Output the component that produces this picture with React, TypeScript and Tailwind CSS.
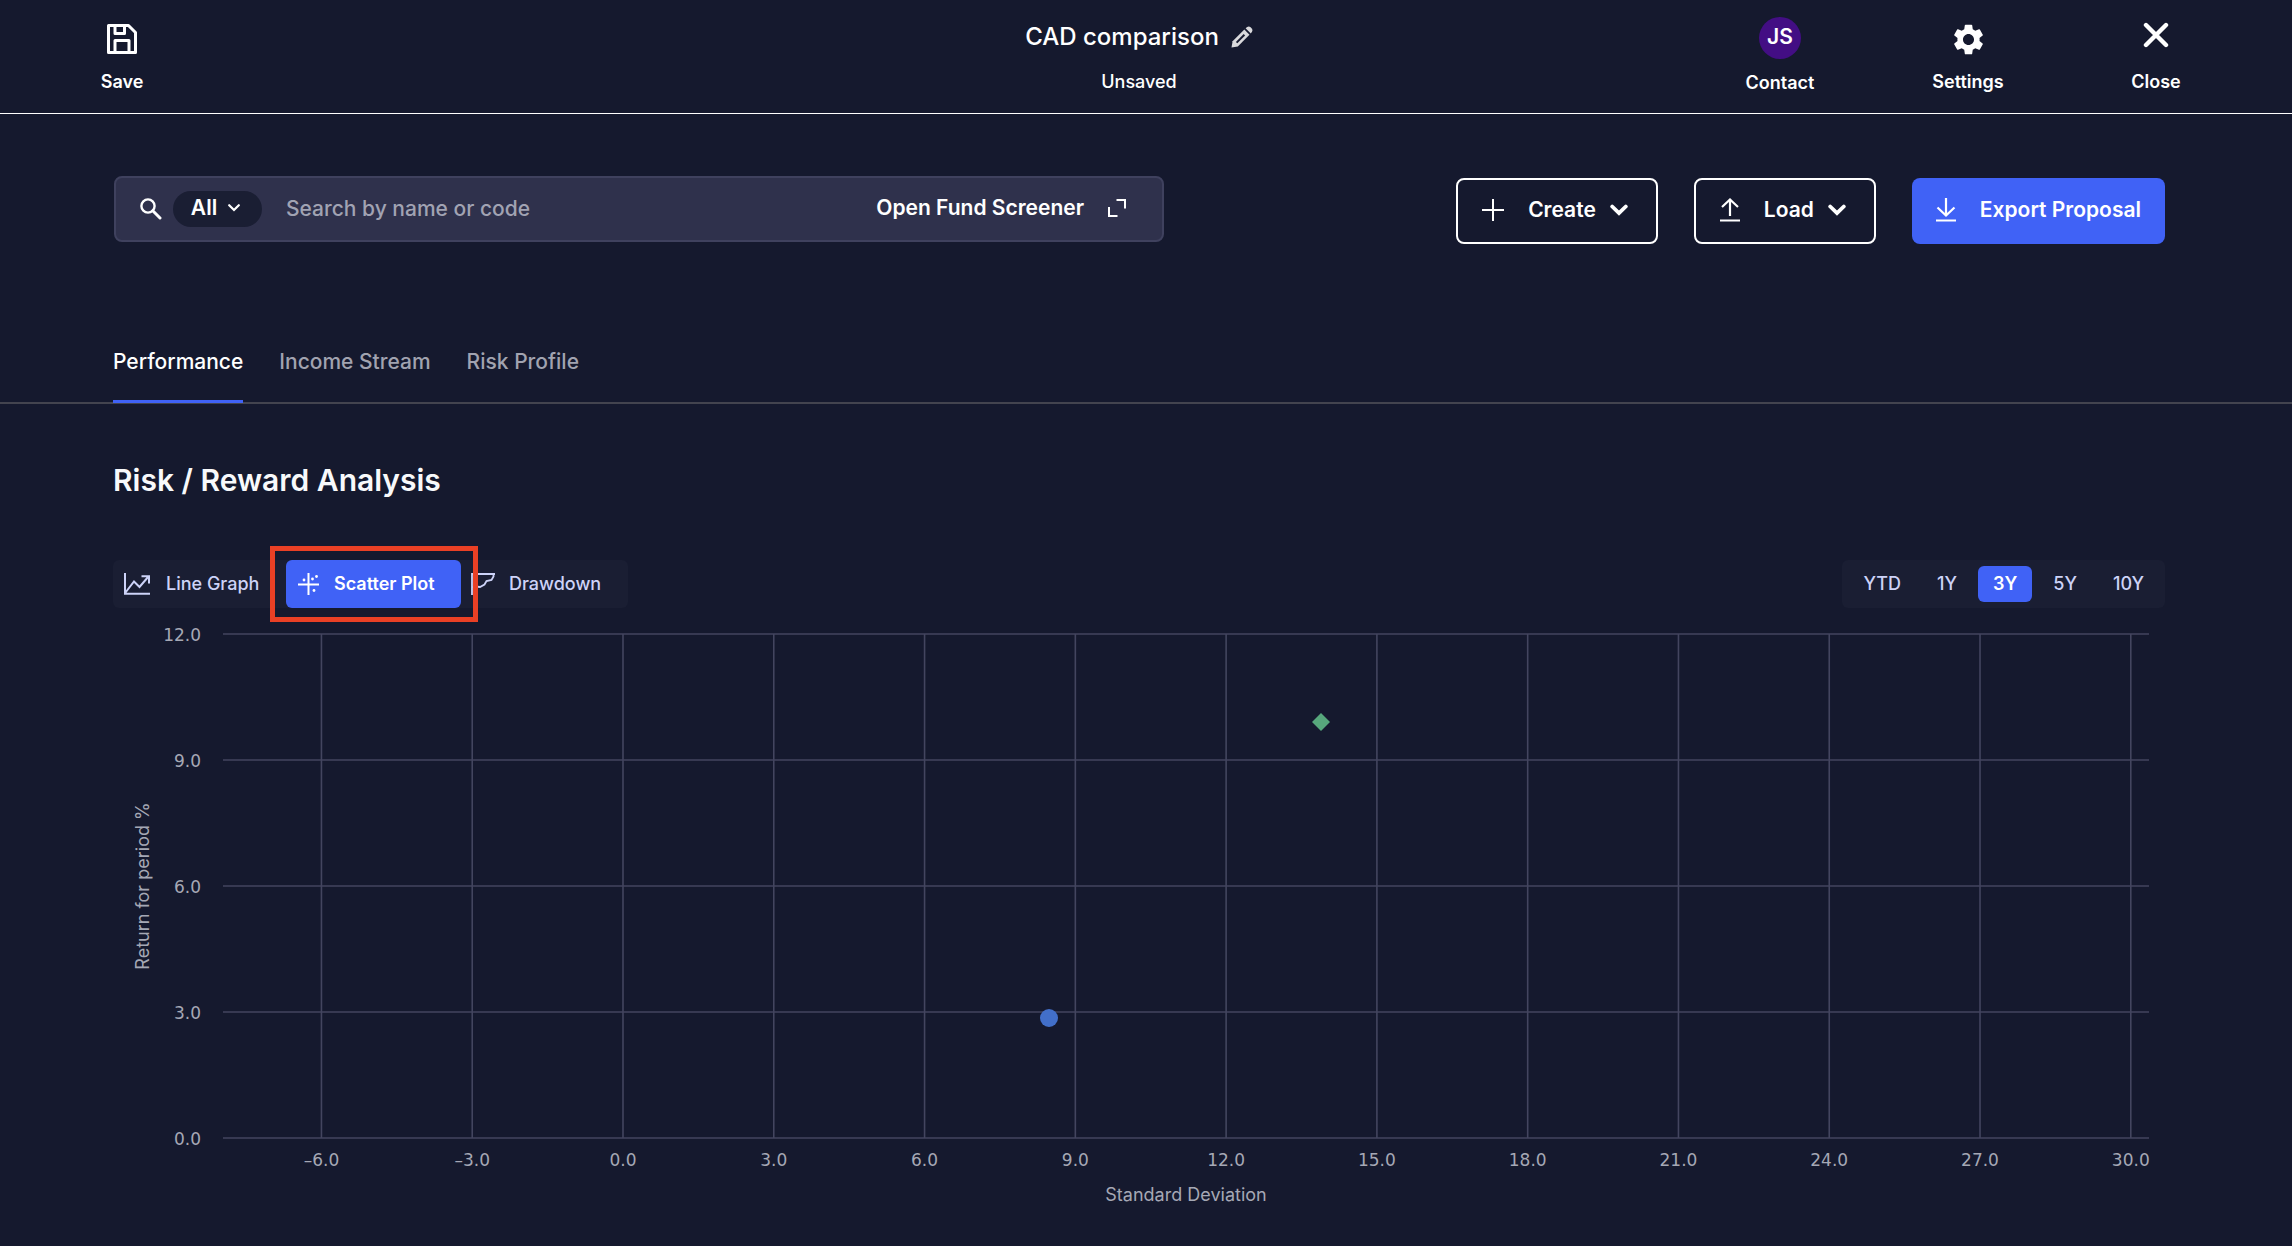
import React from "react";
import { MdSettings } from "react-icons/md";

const SaveIcon = () => (
  <svg width="30" height="30" viewBox="0 0 30 30" fill="none" stroke="currentColor" strokeWidth="3" strokeLinejoin="round" aria-hidden="true">
    <path d="M1.5 1.5H21.5L28.5 8.5V28.5H1.5Z" />
    <path d="M8 2V9.5H17.5V2" />
    <path d="M8 28V16.5H22V28" />
  </svg>
);

const PencilIcon = () => (
  <svg width="22" height="22" viewBox="0 0 22 22" aria-hidden="true">
    <path d="M0.5 21.5L1.6 15.2L13.3 3.5L18.5 8.7L6.8 20.4Z" fill="#d9d9dc" />
    <path d="M5.6 16.6L13.4 8.8" stroke="#15192e" strokeWidth="2" />
    <path d="M14.6 2.2L16.2 0.9Q18 0 19.6 1.2L21 2.8Q22 4.4 21 5.8L19.8 7.4Z" fill="#d9d9dc" />
  </svg>
);

const CloseIcon = () => (
  <svg width="26" height="26" viewBox="0 0 26 26" fill="none" stroke="currentColor" strokeWidth="4.4" strokeLinecap="round" aria-hidden="true">
    <path d="M3 3L23 23M23 3L3 23" />
  </svg>
);

const SearchIcon = () => (
  <svg width="22" height="22" viewBox="0 0 22 22" fill="none" stroke="currentColor" aria-hidden="true">
    <circle cx="8" cy="8" r="6.6" strokeWidth="2.4" />
    <path d="M12.8 12.8L20 20" strokeWidth="3" strokeLinecap="round" />
  </svg>
);

const ExpandIcon = () => (
  <svg width="18" height="18" viewBox="0 0 18 18" fill="none" stroke="currentColor" strokeWidth="2" aria-hidden="true">
    <path d="M8.5 1H17V9.5M1 8V17H9.5" />
  </svg>
);

const PlusIcon = () => (
  <svg width="22" height="22" viewBox="0 0 22 22" fill="none" stroke="currentColor" strokeWidth="2" aria-hidden="true">
    <path d="M11 0V22M0 11H22" />
  </svg>
);

const UploadIcon = () => (
  <svg width="20" height="24" viewBox="0 0 20 24" fill="none" stroke="currentColor" strokeWidth="2.2" aria-hidden="true">
    <path d="M10 18V1.5M2 9L10 1.5L18 9M0 22.5H20" />
  </svg>
);

const DownloadIcon = () => (
  <svg width="20" height="24" viewBox="0 0 20 24" fill="none" stroke="currentColor" strokeWidth="2.2" aria-hidden="true">
    <path d="M10 0V17.5M1.5 9.5L10 17.5L18.5 9.5M0 22.5H20" />
  </svg>
);

const ChevronBold = () => (
  <svg width="18" height="12" viewBox="0 0 18 12" fill="none" stroke="currentColor" strokeWidth="3.8" strokeLinecap="round" aria-hidden="true">
    <path d="M2.2 2.5L9 9.2L15.8 2.5" />
  </svg>
);

const ChevronThin = () => (
  <svg width="12" height="8" viewBox="0 0 12 8" fill="none" stroke="currentColor" strokeWidth="2.2" strokeLinecap="round" aria-hidden="true">
    <path d="M1.2 1.2L6 6L10.8 1.2" />
  </svg>
);

const LineGraphIcon = () => (
  <svg width="26" height="22" viewBox="0 0 26 22" fill="none" stroke="currentColor" strokeWidth="2" aria-hidden="true">
    <path d="M1 0V20.8H26M1.5 19.5L10 8.5L15.5 14L24.5 3.5M17.5 3.2H25V10.5" />
  </svg>
);

const ScatterIcon = () => (
  <svg width="22" height="22" viewBox="0 0 22 22" fill="currentColor" aria-hidden="true">
    <path d="M10.5 0V22M0 11.5H21" stroke="currentColor" strokeWidth="2" fill="none" />
    <circle cx="6" cy="7" r="1.4" />
    <circle cx="14.5" cy="6" r="1.4" />
    <circle cx="18.5" cy="3.5" r="1.4" />
    <circle cx="16" cy="17.5" r="1.4" />
  </svg>
);

const DrawdownIcon = () => (
  <svg width="24" height="22" viewBox="0 0 24 22" fill="none" stroke="currentColor" strokeWidth="1.8" aria-hidden="true">
    <path d="M1 22V1H24M2 14.5L4.5 13.5L9 14L13.5 11.5L15.5 8L20.5 7L22.5 3.5V1" />
  </svg>
);

const navItem = "flex w-[188px] flex-col items-center text-lg leading-6 font-semibold";

const ranges = ["YTD", "1Y", "3Y", "5Y", "10Y"];
const xTicks = [-6, -3, 0, 3, 6, 9, 12, 15, 18, 21, 24, 27, 30];
const yTicks = [12, 9, 6, 3, 0];
const xPos = (v: number) => 510 + v * 50.26;
const yPos = (v: number) => 530 - v * 42;
const fmt = (v: number) => (v < 0 ? "–" : "") + Math.abs(v).toFixed(1);

const ScatterChart = () => (
  <svg viewBox="0 0 2052 604" className="block h-auto w-full" role="img" aria-label="Return for period % against standard deviation">
    <g stroke="#43455f" strokeWidth="1.6">
      {yTicks.map((v) => (
        <line key={v} x1={110} x2={2036} y1={yPos(v)} y2={yPos(v)} />
      ))}
      {xTicks.map((v) => (
        <line key={v} x1={xPos(v)} x2={xPos(v)} y1={yPos(12)} y2={yPos(0)} />
      ))}
    </g>
    <g fill="#a5a8b5" fontSize="17" className="font-['DejaVu_Sans',sans-serif]">
      {yTicks.map((v) => (
        <text key={v} x={88} y={yPos(v) + 7} textAnchor="end">{fmt(v)}</text>
      ))}
      {xTicks.map((v) => (
        <text key={v} x={xPos(v)} y={558} textAnchor="middle">{fmt(v)}</text>
      ))}
    </g>
    <g fill="#a5a8b5" fontSize="18" textAnchor="middle">
      <text x={1073} y={593}>Standard Deviation</text>
      <text transform="translate(36 278) rotate(-90)">Return for period %</text>
    </g>
    <circle cx={936} cy={410} r={9} fill="#426fc9" />
    <path d="M1208 105L1217 114L1208 123L1199 114Z" fill="#57a77c" />
  </svg>
);

export default function App() {
  return (
    <div className="min-h-screen bg-[#15192e] font-['Inter',sans-serif] text-white">
      <header className="grid h-[114px] grid-cols-[1fr_auto_1fr] border-b border-white pr-[42px] pl-7">
        <button type="button" className={navItem}>
          <span className="flex h-[70px] items-center pt-2"><SaveIcon /></span>
          Save
        </button>
        <div className="flex flex-col items-center pt-[21px]">
          <div className="flex items-center gap-3">
            <h1 className="text-2xl leading-8 font-medium">CAD comparison</h1>
            <button type="button" aria-label="Rename"><PencilIcon /></button>
          </div>
          <p className="mt-[17px] text-lg leading-6 font-medium">Unsaved</p>
        </div>
        <nav className="flex justify-end">
          <button type="button" className={navItem}>
            <span className="flex h-[71px] items-center pt-1">
              <span className="flex size-[42px] items-center justify-center rounded-full bg-[#430e84] pb-0.5 text-[21px]">JS</span>
            </span>
            Contact
          </button>
          <button type="button" className={navItem}>
            <span className="flex h-[70px] items-center pt-2"><MdSettings size={37} /></span>
            Settings
          </button>
          <button type="button" className={navItem}>
            <span className="flex h-[70px] items-center"><CloseIcon /></span>
            Close
          </button>
        </nav>
      </header>

      <section className="flex items-start justify-between pt-[62px] pr-[127px] pl-[114px] text-[21px]">
        <div className="flex h-[66px] w-[1050px] items-center rounded-lg border-2 border-[#3f415e] bg-[#2f314c] pr-9 pl-6">
          <SearchIcon />
          <button type="button" className="ml-[11px] flex h-9 w-[89px] items-center justify-center gap-[11px] rounded-full bg-[#1a1e33] pr-1 pb-0.5 font-semibold">
            All <ChevronThin />
          </button>
          <input
            type="text"
            aria-label="Search by name or code"
            placeholder="Search by name or code"
            className="ml-6 min-w-0 flex-1 bg-transparent font-medium outline-none placeholder:text-[#a1a3b3]"
          />
          <button type="button" className="flex items-center gap-6 pb-0.5 font-semibold">
            Open Fund Screener <ExpandIcon />
          </button>
        </div>
        <div className="mt-0.5 flex gap-9 font-semibold">
          <button type="button" className="flex h-[66px] items-center rounded-lg border-2 border-white pr-7 pb-0.5 pl-6">
            <PlusIcon /><span className="mr-3.5 ml-6">Create</span><ChevronBold />
          </button>
          <button type="button" className="flex h-[66px] items-center rounded-lg border-2 border-white pr-7 pb-0.5 pl-6">
            <UploadIcon /><span className="mr-3.5 ml-6">Load</span><ChevronBold />
          </button>
          <button type="button" className="flex h-[66px] items-center gap-6 rounded-lg bg-[#4062f6] px-6 pb-0.5">
            <DownloadIcon />Export Proposal
          </button>
        </div>
      </section>

      <nav className="mt-[98px] flex h-[62px] gap-9 border-b-2 border-[#43444f] pl-[113px] text-[21px] leading-8 font-medium">
        <a href="#performance" className="h-[61px] border-b-3 border-[#4062f6] pt-1">Performance</a>
        <a href="#income" className="pt-1 text-[#a1a3b0]">Income Stream</a>
        <a href="#risk" className="pt-1 text-[#a1a3b0]">Risk Profile</a>
      </nav>

      <main className="pr-[127px] pl-[113px]">
        <h2 className="pt-14 text-3xl leading-10 font-semibold text-[#f8f9fb]">Risk / Reward Analysis</h2>
        <div className="mt-[60px] flex justify-between text-lg font-medium text-[#cdd3f8]">
          <div className="flex h-12 rounded-md bg-[#1a1e33]">
            <button type="button" className="flex w-[173px] items-center gap-4 pl-[11px] whitespace-nowrap">
              <LineGraphIcon />Line Graph
            </button>
            <div className="relative">
              <button type="button" className="flex h-12 w-[175px] items-center gap-3.5 rounded-md bg-[#4062f6] pl-3 font-semibold text-white">
                <ScatterIcon />Scatter Plot
              </button>
              <div className="pointer-events-none absolute -inset-y-3.5 -right-[17px] -left-4 z-10 border-5 border-[#ea4025]" />
            </div>
            <button type="button" className="flex w-[167px] items-center gap-3.5 pl-2.5">
              <DrawdownIcon />Drawdown
            </button>
          </div>
          <div className="flex h-12 items-center gap-1.5 rounded-md bg-[#1a1e33] px-1.5">
            {ranges.map((r) => (
              <button
                key={r}
                type="button"
                className={r === "3Y" ? "h-9 rounded-md bg-[#4062f6] px-[15px] font-semibold text-white" : "h-9 px-[15px]"}
              >
                {r}
              </button>
            ))}
          </div>
        </div>
        <ScatterChart />
      </main>
    </div>
  );
}
